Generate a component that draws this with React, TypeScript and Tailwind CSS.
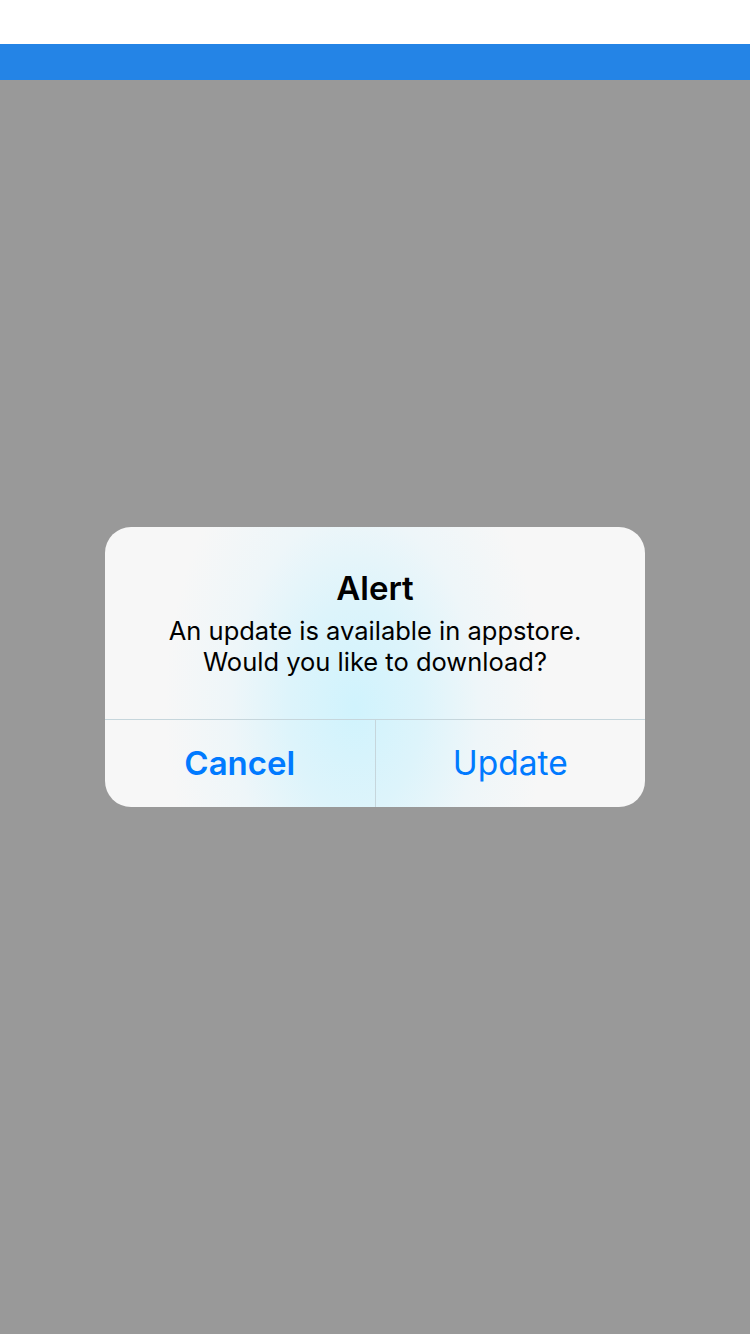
export default function App() {
    return (
        <div className="min-h-screen h-[1334px] flex flex-col bg-[#999999] font-['Inter','Liberation_Sans',sans-serif]">
            <div className="h-[44px] bg-white" />
            <div className="h-[36px] bg-[#2484e6]" />

            <div className="flex-1 flex justify-center pt-[447px]">
                <div className="w-[540px] h-[280px] rounded-[26px] overflow-hidden flex flex-col bg-[#f7f7f7] bg-[radial-gradient(ellipse_190px_300px_at_250px_180px,#d0f3fd_0%,#ddf4fb_35%,#eef6f9_65%,#f7f7f7_100%)]">
                    {/* contenu */}
                    <div className="h-[192px] flex flex-col items-center pt-[41px] text-black">
                        <div className="text-[33px] leading-[40px] font-semibold">Alert</div>
                        <div className="mt-[7px] text-[25.5px] leading-[31px] text-center">
                            An update is available in appstore.
                            <br />
                            Would you like to download?
                        </div>
                    </div>

                    <div className="flex-1 flex border-t border-[#c6d6dc]">
                        <button className="flex-1 flex items-center justify-center text-[33px] font-semibold text-[#007aff]">
                            Cancel
                        </button>
                        <div className="w-px bg-[#c6d6dc]" />
                        <button className="flex-1 flex items-center justify-center text-[33.5px] text-[#007aff]">
                            Update
                        </button>
                    </div>
                </div>
            </div>
        </div>
    )
}
